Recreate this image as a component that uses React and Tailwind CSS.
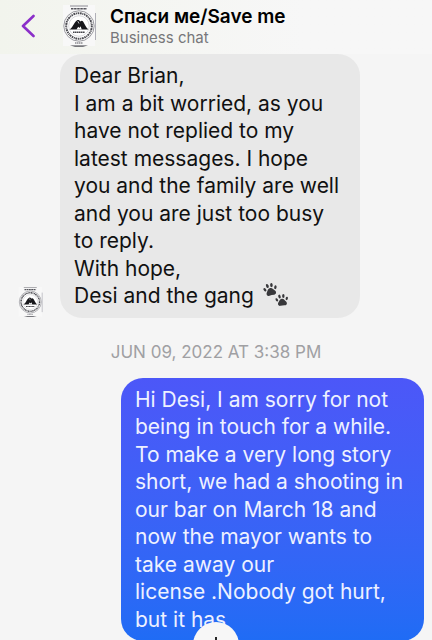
import React from "react";

const FONT = "font-['Inter','Liberation_Sans',sans-serif]";

// Round shelter badge with a narrow strip above and below it
const ShelterLogo = ({ className }) => (
  <svg viewBox="0 0 36 44" className={className} role="img" aria-label="Спаси ме logo">
    <rect x="1" y="1" width="32" height="41" fill="#f8f8f8" />
    <path d="M33.5 9v27" stroke="#b0b0b8" strokeWidth="1" />
    <path d="M8 2h18" stroke="#8a8a90" strokeWidth="1" />
    <path d="M9 4.800h16" stroke="#55555c" strokeWidth="1.600" strokeDasharray="2.5 .6" />
    <path d="M13 39h8" stroke="#8a8a90" strokeWidth="1.5" strokeDasharray="1.5 .5" />
    <path d="M8 41.300h18l-5 1.600h-8z" fill="#77777c" />
    <circle cx="17" cy="22" r="15.2" fill="#fff" stroke="#808086" strokeWidth=".8" />
    <circle
      cx="17"
      cy="22"
      r="12.8"
      fill="none"
      stroke="#4c4c52"
      strokeWidth="2"
      strokeDasharray="1.5 .7 2 .6 1 .7"
    />
    <circle cx="17" cy="22" r="10.3" fill="none" stroke="#b4b4ba" strokeWidth=".5" />
    <path
      d="M7.5 25.5c2-1 3-3 4.300-5.200 1-1.800 2.300-3.800 3.700-4.300 1.200-.4 2.200.2 2.900 1.400 1-.9 2.200-.7 3 .5 1.500 2.300 2.700 5.600 5.100 7.600z"
      fill="#17171b"
    />
    <path d="M14.500 25.500l1.700-2.700 1.300 1.300 1-1.800 1.300 3.200z" fill="#fff" />
    <path d="M15.800 17.200l1.200 2.300" stroke="#fff" strokeWidth=".7" />
    <path d="M11 28.200h12" stroke="#44444a" strokeWidth="1.400" strokeDasharray="1.600 .4" />
  </svg>
);

const Paw = ({ transform }) => (
  <g transform={transform}>
    <ellipse cx="-5.400" cy="-1.500" rx="1.200" ry="1.900" transform="rotate(-25 -5.4 -1.5)" />
    <ellipse cx="-2.100" cy="-4.600" rx="1.300" ry="2.100" transform="rotate(-8 -2.1 -4.6)" />
    <ellipse cx="2.100" cy="-4.600" rx="1.300" ry="2.100" transform="rotate(8 2.1 -4.6)" />
    <ellipse cx="5.400" cy="-1.500" rx="1.200" ry="1.900" transform="rotate(25 5.4 -1.5)" />
    <path d="M0-2C2.200-2 3 .1 4.200 1.600 5.700 3.600 4.400 5.700 2.400 5.400 .9 5.100-.9 5.100-2.400 5.400-4.400 5.700-5.700 3.600-4.200 1.600-3 .1-2.200-2 0-2z" />
  </g>
);

const PawPrints = () => (
  <svg
    viewBox="0 0 28 26"
    className="ml-0.5 inline-block h-[26px] w-7 align-[-5px] fill-[#38383b]"
    role="img"
    aria-label="paw prints"
  >
    <Paw transform="translate(8.500 8) rotate(-14)" />
    <Paw transform="translate(20 18.500) rotate(-8) scale(.93)" />
  </svg>
);

const ChatHeader = () => (
  <header className="flex h-[54px] shrink-0 items-start bg-linear-to-r from-[#f2f4ed] to-[#f7f7f7] to-70% pt-1 pl-4">
    <button type="button" aria-label="Back" className="mt-1.5 flex h-8 w-6 items-center justify-center">
      <svg viewBox="0 0 14 24" className="h-6 w-3.5" fill="none">
        <path
          d="M12.500 2L2 12l10.500 10"
          stroke="#8b2fc9"
          strokeWidth="2.600"
          strokeLinecap="round"
          strokeLinejoin="round"
        />
      </svg>
    </button>
    <ShelterLogo className="ml-[22px] h-11 w-9" />
    <div className="ml-3">
      <h1 className="mt-[3px] text-[19px] leading-5 font-semibold text-black">Спаси ме/Save me</h1>
      <p className="text-[15px] leading-[22px] text-[#77777a]">Business chat</p>
    </div>
  </header>
);

const App = () => {
  return (
    <div className={`relative flex h-screen flex-col overflow-hidden bg-[#f5f5f5] ${FONT}`}>
      <ChatHeader />

      <main className="min-h-0 flex-1 overflow-hidden">
        <div className="flex items-end gap-4 pl-[18px]">
          <ShelterLogo className="h-8 w-[26px] shrink-0" />
          <div className="w-[300px] rounded-[22px] bg-[#e8e8e8] px-3.5 pt-2 pb-2 text-[21px] leading-[1.31] text-[#111]">
            <p>Dear Brian,</p>
            <p>
              I am a bit worried, as you have not replied to my latest messages. I hope you and the
              family are well and you are just too busy to reply.
            </p>
            <p>With hope,</p>
            <p>
              Desi and the gang <PawPrints />
            </p>
          </div>
        </div>

        <p className="mt-6 text-center text-[17px] leading-5 text-[#a0a0a3]">JUN 09, 2022 AT 3:38 PM</p>

        <div className="mt-4 flex justify-end pr-2">
          <p className="w-[303px] rounded-[22px] bg-linear-to-b from-[#4c57f8] to-[#1f6cf5] px-3.5 pt-2 pb-2 text-[21px] leading-[1.31] text-[#eef1ff]">
            Hi Desi, I am sorry for not being in touch for a while. To make a very long story short,
            we had a shooting in our bar on March 18 and now the mayor wants to take away our
            license&nbsp;.Nobody got hurt, but it has
          </p>
        </div>
      </main>

      {/* Jump to latest message */}
      <button
        type="button"
        aria-label="Scroll to latest"
        className="absolute -bottom-7 left-1/2 flex size-[46px] -translate-x-1/2 items-center justify-center rounded-full bg-[#f7f7f7]"
      >
        <svg viewBox="0 0 16 16" className="size-4" fill="none" stroke="#111" strokeWidth="1.800">
          <path d="M8 0v14M2 8l6 6 6-6" />
        </svg>
      </button>
    </div>
  );
};

export default App;
